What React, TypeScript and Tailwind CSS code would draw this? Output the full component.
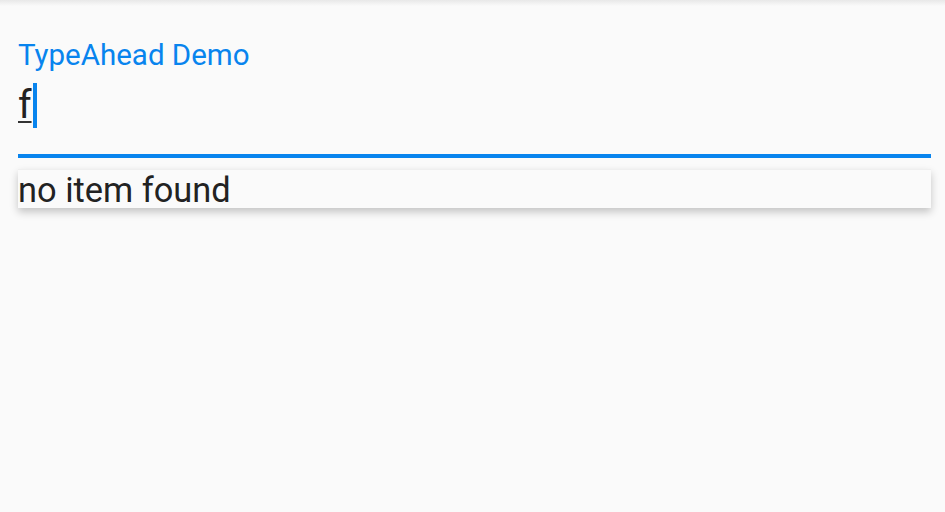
import React from 'react';

const App: React.FC = () => {
  return (
    <div
      className="w-[945px] h-[512px] bg-[#fafafa] overflow-hidden"
      style={{ fontFamily: 'Roboto, "Noto Sans", sans-serif' }}
    >
      {/* тень от шапки */}
      <div className="h-[6px] bg-gradient-to-b from-[#e8e8e8] to-[#fafafa]" />

      <div className="pl-[18px] pr-[14px] pt-[32px]">
        <div className="text-[29.5px] leading-[35px] text-[#0884ee]">TypeAhead Demo</div>

        <div className="mt-[9px] h-[46px] flex items-center">
          <span className="text-[39px] leading-[46px] text-[#222222] underline decoration-[2px] underline-offset-[3px] decoration-[#333333]">
            f
          </span>
          <span className="ml-[1px] w-[4px] h-[45px] bg-[#0884ee]" />
        </div>

        <div className="mt-[26px] h-[4px] bg-[#0884ee]" />

        <div className="mt-[11px] h-[39px] bg-[#fafafa] border-t border-[#efefef] shadow-[0_4px_8px_rgba(0,0,0,0.22)]">
          <div className="text-[34.4px] leading-[40px] text-[#222222]">no item found</div>
        </div>
      </div>
    </div>
  );
};

export default App;
